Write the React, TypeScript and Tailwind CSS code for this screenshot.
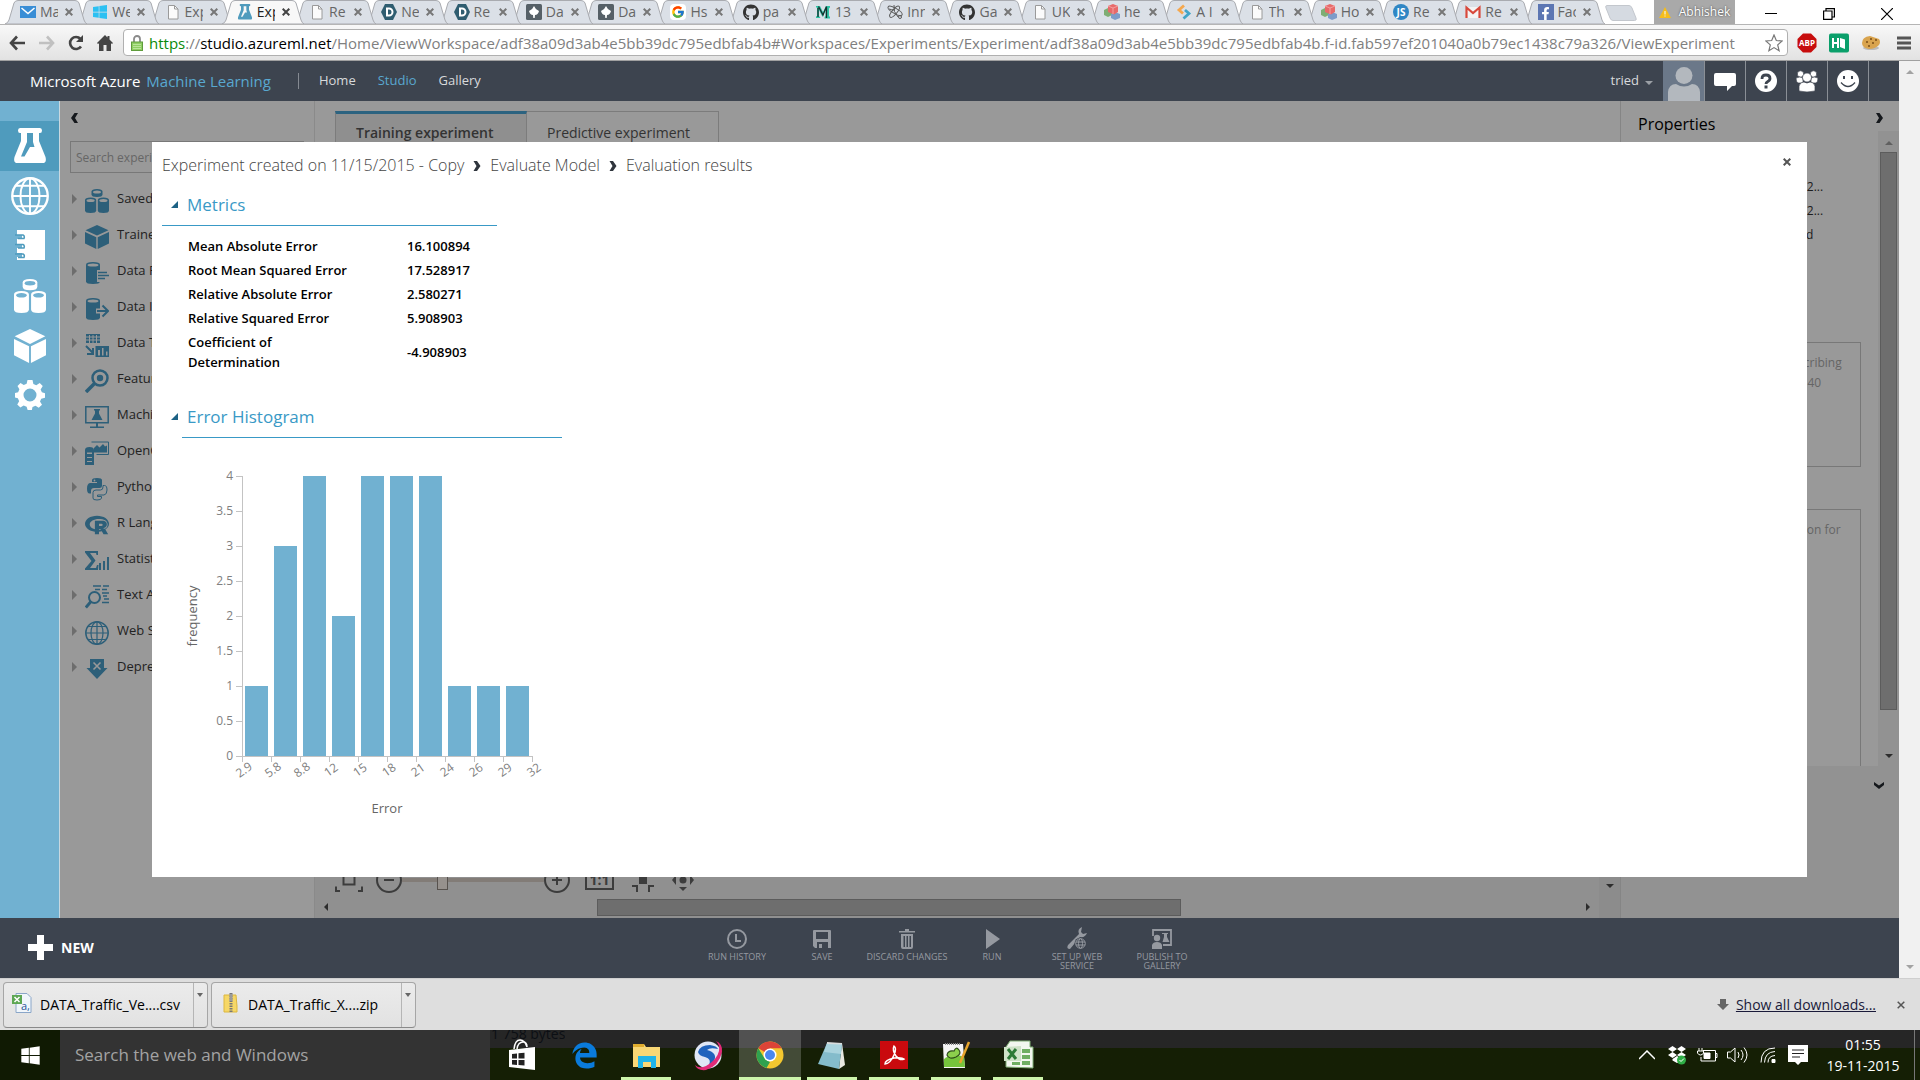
import { useState, type ReactNode } from 'react'
import { FaEdgeLegacy, FaFacebookF, FaGithub, FaRProject, FaWindows } from 'react-icons/fa'
import { FcGoogle } from 'react-icons/fc'

const SANS = "font-['Segoe_UI','Open_Sans','Noto_Sans',sans-serif]"

// ── Favicons ──────────────────────────────────────────────────────────────────

function PageIcon() {
  return (
    <svg viewBox="0 0 16 16" className="w-4 h-4" aria-hidden>
      <path d="M3.5 1.5h6l3.5 3.5v10h-9.500z" fill="#fbfbfb" stroke="#9a9a9a" />
      <path d="M9.500 1.500v3.500h3.500" fill="none" stroke="#9a9a9a" />
    </svg>
  )
}

function MailIcon() {
  return (
    <svg viewBox="0 0 16 16" className="w-4 h-4" aria-hidden>
      <path d="M0 2h16v12H0z" fill="#3a8ed6" />
      <path d="M1.500 4L8 9.500 14.500 4" fill="none" stroke="#fff" strokeWidth="1.500" />
    </svg>
  )
}

function FlaskIcon({ className = 'w-4 h-4' }: { className?: string }) {
  return (
    <svg viewBox="0 0 32 36" className={className} fill="currentColor" fillRule="evenodd" aria-hidden>
      <path d="M6 0h20q2 0 2 2.500T26 5h-1v8l6.500 16q1.500 6-3 6h-25q-4.500 0-3-6L7 13V5H6Q4 5 4 2.500T6 0zM13 5v9L7 28.500h3.500L16 19h4.500L19 14V5z" />
    </svg>
  )
}

function HexIcon() {
  return (
    <svg viewBox="0 0 16 16" className="w-4 h-4" aria-hidden>
      <path d="M4 0h8l4 8-4 8H4L0 8z" fill="#2f5d70" />
      <path d="M6 4.500h2a3.500 3.500 0 0 1 0 7H6z" fill="none" stroke="#fff" strokeWidth="2" />
    </svg>
  )
}

function LeafIcon() {
  return (
    <svg viewBox="0 0 16 16" className="w-4 h-4" aria-hidden>
      <rect width="16" height="16" rx="1.500" fill="#566067" />
      <path d="M8 2q1 3 5 5-1 4-4 4l-.3 3H7.300L7 11q-3 0-4-4 4-2 5-5z" fill="#fff" />
    </svg>
  )
}

function GoogleIcon() {
  return (
    <span className="flex w-4 h-4 items-center justify-center rounded-sm bg-white">
      <FcGoogle size={14} />
    </span>
  )
}

function MIcon() {
  return (
    <svg viewBox="0 0 16 16" className="w-4 h-4" aria-hidden>
      <path d="M1 2h4l3 6 3-6h4v1.500l-1 1V12l1 1v1.500H9.500V13l1-1V6L7.500 13 4 6v6l1.500 2H1V12.500l1-.5V4L1 3z" fill="#2fc3a5" />
      <path d="M3.500 2.500L8 11l3.500-8.500M11.500 3v11M3 4v9" fill="none" stroke="#16302d" strokeWidth="1.300" />
    </svg>
  )
}

function AtomIcon() {
  return (
    <svg viewBox="0 0 16 16" className="w-4 h-4" fill="none" stroke="#5b5b5b" aria-hidden>
      <ellipse cx="7.500" cy="7" rx="8" ry="2.600" transform="rotate(30 8 8)" />
      <ellipse cx="8" cy="7.500" rx="7" ry="2.400" transform="rotate(-50 8 8)" />
      <path d="M7 1q-1 7 4 12M2 5q3 1 5 1" />
      <circle cx="13" cy="13" r="1.500" />
    </svg>
  )
}

function CubesIcon() {
  return (
    <svg viewBox="0 0 16 16" className="w-4 h-4" aria-hidden>
      <path d="M0 6l4-2 4 2v5l-4 2-4-2z" fill="#7fae74" />
      <path d="M7 10l4-2 5 2v4l-5 2-4-2z" fill="#7d9cc9" />
      <path d="M4 2l5-2 5 2v6l-4 2.500L4 8z" fill="#e86a6a" />
      <path d="M4 2l5 2 5-2M9 4v6" fill="none" stroke="#f3a0a0" />
    </svg>
  )
}

function BracketsIcon() {
  return (
    <svg viewBox="0 0 16 16" className="w-4 h-4" fill="none" strokeWidth="2.800" aria-hidden>
      <path d="M8 1.500L3 6l4 3.500" stroke="#f5a84e" />
      <path d="M9 6l4 3.500-5.500 5" stroke="#42a5c8" />
    </svg>
  )
}

function JsIcon() {
  return (
    <svg viewBox="0 0 16 16" className="w-4 h-4" aria-hidden>
      <circle cx="8" cy="8" r="8" fill="#2f86c4" />
      <text x="8" y="12" textAnchor="middle" fontSize="10" fontWeight="700" fill="#fff">JS</text>
    </svg>
  )
}

function GmailIcon() {
  return (
    <svg viewBox="0 0 16 16" className="w-4 h-4" aria-hidden>
      <path d="M1 3h14v11H1z" fill="#f4f4f4" />
      <path d="M1.500 14V3.500L8 9l6.500-5.500V14" fill="none" stroke="#d8493c" strokeWidth="2.200" />
    </svg>
  )
}

function FacebookIcon() {
  return (
    <span className="flex w-4 h-4 items-end justify-center bg-[#5c76b3] text-white">
      <FaFacebookF size={13} />
    </span>
  )
}

const windowsIcon = <FaWindows size={16} className="text-[#2cc0f2]" />
const githubIcon = <FaGithub size={17} className="text-[#333]" />

const TABS: Array<{ label: string; icon: ReactNode; active?: boolean }> = [
  { label: 'Ma', icon: <MailIcon /> },
  { label: 'We', icon: windowsIcon },
  { label: 'Exp', icon: <PageIcon /> },
  { label: 'Exp', icon: <FlaskIcon className="w-4 h-4 text-[#4f9bbd]" />, active: true },
  { label: 'Re', icon: <PageIcon /> },
  { label: 'Ne', icon: <HexIcon /> },
  { label: 'Re', icon: <HexIcon /> },
  { label: 'Da', icon: <LeafIcon /> },
  { label: 'Da', icon: <LeafIcon /> },
  { label: 'Hs', icon: <GoogleIcon /> },
  { label: 'pa', icon: githubIcon },
  { label: '13', icon: <MIcon /> },
  { label: 'Inn', icon: <AtomIcon /> },
  { label: 'Ga', icon: githubIcon },
  { label: 'UK', icon: <PageIcon /> },
  { label: 'he', icon: <CubesIcon /> },
  { label: 'A I', icon: <BracketsIcon /> },
  { label: 'Th', icon: <PageIcon /> },
  { label: 'Ho', icon: <CubesIcon /> },
  { label: 'Re', icon: <JsIcon /> },
  { label: 'Re', icon: <GmailIcon /> },
  { label: 'Fac', icon: <FacebookIcon /> },
]

function Cross({ size = 8, width = 2 }: { size?: number; width?: number }) {
  return (
    <svg width={size} height={size} viewBox="0 0 8 8" stroke="currentColor" strokeWidth={width} aria-hidden>
      <path d="M.7.7l6.600 6.600M7.300.7L.7 7.300" />
    </svg>
  )
}

// ── Browser chrome ────────────────────────────────────────────────────────────

function TabStrip() {
  return (
    <div className="flex h-6 bg-white pl-[5px]">
      <div className="flex flex-1 min-w-0 isolate" role="tablist">
        {TABS.map((tab, i) => (
          <div
            key={i}
            role="tab"
            aria-selected={!!tab.active}
            className="relative flex flex-1 min-w-0 items-center pl-[15px]"
            style={{ zIndex: tab.active ? 50 : 30 - i }}
          >
            <svg viewBox="0 0 82 24" preserveAspectRatio="none" className="absolute left-0 top-0 -z-10 h-6 w-[82px]" aria-hidden>
              <path
                d="M0 24Q3 23 4 20L9 3Q10 .5 13 .5H70Q73 .5 74 3L79 20Q80 23 82 24Z"
                fill={tab.active ? '#f8f8f8' : '#dbe0e7'}
                stroke="#a9abb0"
              />
            </svg>
            <span className="flex w-4 shrink-0 justify-center">{tab.icon}</span>
            <span
              className={`ml-1 w-[18px] shrink-0 overflow-hidden whitespace-nowrap text-sm leading-5 ${
                tab.active ? 'text-[#222]' : 'text-[#666]'
              }`}
            >
              {tab.label}
            </span>
            <button type="button" aria-label="Close tab" className={`ml-[7px] shrink-0 ${tab.active ? 'text-[#444]' : 'text-[#777]'}`}>
              <Cross />
            </button>
          </div>
        ))}
      </div>
      <button type="button" aria-label="New tab" className="ml-[10px] mt-[5px] h-4 w-[32px]">
        <svg viewBox="0 0 32 16" className="h-4 w-8" aria-hidden>
          <path d="M2 .5h22q2 0 3 2.500l4 10q1 2.500-1.500 2.500H8q-2 0-3-2.500L1 3Q0 .5 2 .5z" fill="#d5dae1" stroke="#c3c7cd" />
        </svg>
      </button>
      <div className="ml-[17px] flex w-[81px] items-center justify-center gap-2 bg-[#a9a9a9] text-xs text-white">
        <svg viewBox="0 0 12 11" className="h-[11px] w-3" aria-hidden>
          <path d="M6 0l6 11H0z" fill="#f5bd1c" />
          <path d="M6 4v3.500M6 8.500v1" stroke="#fff" />
        </svg>
        <span className="[text-shadow:0_0_2px_#333]">Abhishek</span>
      </div>
      <div className="flex w-[185px] items-center text-black">
        <button type="button" aria-label="Minimize" className="ml-[30px] w-3">
          <svg viewBox="0 0 12 12" className="w-3 h-3 mt-1" stroke="currentColor" aria-hidden><path d="M0 5.500h12" /></svg>
        </button>
        <button type="button" aria-label="Restore" className="ml-[46px] w-3">
          <svg viewBox="0 0 12 12" className="w-3 h-3 mt-1" fill="none" stroke="currentColor" strokeWidth="1.200" aria-hidden>
            <path d="M.6 3h8.400v8.400H.6zM3 3V.6h8.400V9H9" />
          </svg>
        </button>
        <button type="button" aria-label="Close window" className="ml-[46px] w-3">
          <svg viewBox="0 0 12 12" className="w-3 h-3 mt-1" stroke="currentColor" strokeWidth="1.200" aria-hidden>
            <path d="M0 0l12 12M12 0L0 12" />
          </svg>
        </button>
      </div>
    </div>
  )
}

function AddressBar() {
  const [path, setPath] = useState(
    '/Home/ViewWorkspace/adf38a09d3ab4e5bb39dc795edbfab4b#Workspaces/Experiments/Experiment/adf38a09d3ab4e5bb39dc795edbfab4b.f-id.fab597ef201040a0b79ec1438c79a326/ViewExperiment',
  )
  return (
    <div className="flex h-[37px] items-center border-b border-t border-b-[#a0a0a0] border-t-[#b5b5b5] bg-linear-to-b from-[#f8f8f8] to-[#e2e2e2] pl-[9px] pr-[9px] text-[#4a4a4a]">
      <button type="button" aria-label="Back" className="w-4">
        <svg viewBox="0 0 16 16" className="w-4 h-4" fill="none" stroke="#444" strokeWidth="2.600" aria-hidden><path d="M8 1.500L2 8l6 6.500M2 8h14" /></svg>
      </button>
      <button type="button" aria-label="Forward" className="ml-[14px] w-4">
        <svg viewBox="0 0 16 16" className="w-4 h-4" fill="none" stroke="#c0c0c0" strokeWidth="2.600" aria-hidden><path d="M8 1.500L14 8l-6 6.500M14 8H0" /></svg>
      </button>
      <button type="button" aria-label="Reload" className="ml-[13px] w-4">
        <svg viewBox="0 0 16 16" className="w-4 h-4" fill="none" aria-hidden>
          <path d="M13 11.500A6 6 0 1 1 12.500 4" stroke="#444" strokeWidth="2.600" />
          <path d="M15 0v7H8z" fill="#444" />
        </svg>
      </button>
      <button type="button" aria-label="Home" className="ml-[13px] w-4">
        <svg viewBox="0 0 16 16" className="w-4 h-4" fill="#444" aria-hidden>
          <path d="M8 0l2.500 2.500V1h2v3.500L16 8l-1 1-1-.8V16H9.500v-6h-3v6H2V8.200L1 9 0 8z" />
        </svg>
      </button>
      <div className="ml-[10px] flex h-[27px] min-w-0 flex-1 items-center rounded-sm border border-[#b0b0b0] bg-white pl-[7px] pr-1 text-[15px] leading-6">
        <svg viewBox="0 0 12 16" className="h-4 w-3 shrink-0" aria-hidden>
          <path d="M3 8V4a3 3 0 0 1 6 0v4" fill="none" stroke="#8b8b8b" strokeWidth="1.800" />
          <rect x=".5" y="7" width="11" height="8.500" fill="#8fce63" stroke="#5f9c3c" />
          <path d="M2 9.500h8M2 11.500h8M2 13.500h8" stroke="#b9e59a" />
        </svg>
        <label htmlFor="address" className="ml-1.5 whitespace-nowrap text-[#808080]">
          <span className="text-[#0a8a0a]">https</span>://<span className="text-black">studio.azureml.net</span>
        </label>
        <input
          id="address"
          value={path}
          onChange={(e) => setPath(e.target.value)}
          className="min-w-0 flex-1 bg-transparent text-[#808080] outline-none"
        />
        <button type="button" aria-label="Bookmark this page">
          <svg viewBox="0 0 18 18" className="w-[18px] h-[18px]" fill="none" stroke="#777" strokeWidth="1.200" aria-hidden>
            <path d="M9 1l2.300 5.500 5.900.5-4.500 3.900 1.400 5.800L9 13.600l-5.100 3.100 1.400-5.800L.8 7l5.900-.5z" />
          </svg>
        </button>
      </div>
      <button type="button" aria-label="AdBlock Plus" className="ml-[9px] w-5">
        <svg viewBox="0 0 20 20" className="w-5 h-5" aria-hidden>
          <path d="M6 .5h8l5.500 5.500v8L14 19.500H6L.5 14V6z" fill="#c70d0d" />
          <text x="10" y="13" textAnchor="middle" fontSize="8" fontWeight="700" fill="#fff">ABP</text>
        </svg>
      </button>
      <button type="button" aria-label="Highlighter" className="ml-3 w-5">
        <svg viewBox="0 0 20 20" className="w-5 h-5" aria-hidden>
          <rect y=".5" width="20" height="19" rx="2" fill="#0a9f6a" />
          <path d="M4 5v10M4 10h5M9 5v10" stroke="#fff" strokeWidth="2" />
          <path d="M11 5l5 1.500V16l-5-2z" fill="#fff" />
        </svg>
      </button>
      <button type="button" aria-label="Cookies" className="ml-3 w-5">
        <svg viewBox="0 0 20 20" className="w-5 h-5" aria-hidden>
          <ellipse cx="10" cy="15" rx="8" ry="2" fill="#bbb" />
          <path d="M1 10q0-6 8-7l9 3q2 3 0 6-4 4-10 4-7-1-7-6z" fill="#d9a44e" />
          <path d="M5 9h2M9 6h2M11 10h2M7 13h2M14 7h2" stroke="#7b4d17" strokeWidth="1.500" />
        </svg>
      </button>
      <button type="button" aria-label="Menu" className="ml-4 w-[14px]">
        <svg viewBox="0 0 14 14" className="w-[14px] h-[14px]" stroke="#555" strokeWidth="3" aria-hidden>
          <path d="M0 2h14M0 7h14M0 12h14" />
        </svg>
      </button>
    </div>
  )
}

// ── Studio header ─────────────────────────────────────────────────────────────

const HEADER_ICONS: Array<{ name: string; icon: ReactNode }> = [
  {
    name: 'Feedback',
    icon: <path d="M2 3h18q2 0 2 2v9q0 2-2 2h-2l-5 5v-5H2q-2 0-2-2V5q0-2 2-2z" fill="#fff" />,
  },
  {
    name: 'Help',
    icon: (
      <>
        <circle cx="11" cy="11" r="11" fill="#fff" />
        <path d="M7 9q0-4 4-4t4 3.500q0 2-2.500 3.200-1.500.8-1.500 2.300" fill="none" stroke="#3d444f" strokeWidth="2.800" />
        <path d="M9.500 15.500h3v3h-3z" fill="#3d444f" />
      </>
    ),
  },
  {
    name: 'Community',
    icon: (
      <g fill="#fff" stroke="#3d444f" strokeWidth=".7">
        <circle cx="4.500" cy="4" r="3.200" />
        <circle cx="17.500" cy="4" r="3.200" />
        <path d="M0 8q4-2 7 0v5H2q-2-1-2-5zM22 8q-4-2-7 0v5h5q2-1 2-5z" />
        <circle cx="11" cy="7.500" r="4.500" />
        <path d="M3 21v-5q1-4 5-4 3 2 6 0 4 0 5 4v5q-8 2-16 0z" />
      </g>
    ),
  },
  {
    name: 'Smile',
    icon: (
      <>
        <circle cx="11" cy="11" r="11" fill="#fff" />
        <path d="M7 6v3M15 6v3" stroke="#3d444f" strokeWidth="2" />
        <path d="M4 12.500q7 8 14 0" fill="none" stroke="#3d444f" strokeWidth="1.300" />
      </>
    ),
  },
]

function StudioHeader() {
  return (
    <header className="flex h-10 items-stretch bg-[#3d444f] pl-[30px] text-[13px] text-[#d8dadc]">
      <div className="flex items-center gap-1.5 text-[15px]">
        <span className="text-white">Microsoft Azure</span>
        <span className="text-[#59a8d0]">Machine Learning</span>
      </div>
      <nav className="ml-[27px] flex items-center">
        <span className="mr-5 h-4 w-px bg-[#858a92]" />
        <a href="#home" className="mr-[22px]">Home</a>
        <a href="#studio" className="mr-[22px] text-[#59a8d0]">Studio</a>
        <a href="#gallery">Gallery</a>
      </nav>
      <button type="button" className="ml-auto mr-[10px] flex items-center gap-1.5">
        tried
        <svg viewBox="0 0 8 4" className="mt-1 h-1 w-2" fill="#9ba0a6" aria-hidden><path d="M0 0h8L4 4z" /></svg>
      </button>
      <button type="button" aria-label="Account" className="flex w-[41px] items-end justify-center bg-[#6b7889]">
        <svg viewBox="0 0 32 34" className="w-8 h-[34px]" fill="#b3b8be" aria-hidden>
          <circle cx="16" cy="8.500" r="8.500" />
          <path d="M0 34V25q1-8 8-8 8 5 16 0 7 0 8 8v9z" />
        </svg>
      </button>
      {HEADER_ICONS.map((h) => (
        <button key={h.name} type="button" aria-label={h.name} className="flex w-[41px] items-center justify-center border-l border-[#8a8f96]">
          <svg viewBox="0 0 22 22" className="w-[22px] h-[22px]" aria-hidden>{h.icon}</svg>
        </button>
      ))}
      <span className="w-[31px] border-l border-[#8a8f96]" />
    </header>
  )
}

// ── Module and rail icons, 24 × 24 ────────────────────────────────────────────

const cylinder = (x: number, y: number, w: number, h: number) => (
  <g>
    <path d={`M${x} ${y + 2.500}q0-2.500 ${w / 2}-2.500t${w / 2} 2.500v${h - 5}q0 2.500 -${w / 2} 2.500t-${w / 2}-2.500z`} />
    <ellipse cx={x + w / 2} cy={y + 3} rx={w / 2 - 1.500} ry="1.600" className="fill-(--hole)" />
  </g>
)

const cylinders = (
  <>
    {cylinder(6.500, 0, 11, 8)}
    {cylinder(0, 8.500, 11.200, 15.500)}
    {cylinder(12.800, 8.500, 11.200, 15.500)}
  </>
)

const cube = (
  <path d="M12 0l11.500 5.200L12 10.500.5 5.200zM0 7l11.300 5.200V24L0 18.500zM24 7l-11.300 5.200V24L24 18.500z" />
)

const globe = (
  <g fill="none" stroke="currentColor" strokeWidth="1.200">
    <circle cx="12" cy="12" r="11.200" strokeWidth="1.500" />
    <ellipse cx="12" cy="12" rx="6" ry="11.200" />
    <path d="M12 .8v22.400M.8 12h22.400M3 5.500h18M3 18.500h18" />
  </g>
)

const GEAR = (
  <path
    fillRule="evenodd"
    d="M10 0h4l.7 3.200 2.300 1L19.800 2.300l2.400 2.400-1.700 2.800 1 2.300L24 10.500v3.600l-3 .8-1 2.200 1.600 2.700-2.600 2.400-2.600-1.600-2.400 1L13.500 24h-3.400l-.8-2.600-2.400-1-2.600 1.600-2.500-2.500 1.500-2.600-1-2.300L0 14v-3.600l2.500-.7 1-2.300L2 4.800 4.400 2.300 7 3.900l2.300-1zM12 6.800a5.200 5.200 0 1 0 0 10.400 5.200 5.200 0 0 0 0-10.400z"
  />
)

const MODULES: Array<{ label: string; icon: ReactNode }> = [
  { label: 'Saved Datasets', icon: cylinders },
  { label: 'Trained Models', icon: cube },
  {
    label: 'Data Format Conversions',
    icon: (
      <>
        {cylinder(1, 1, 14, 22)}
        <path d="M12 9h12v12H12z" className="fill-(--hole)" />
        <path d="M13 11.500h9M13 14.500h11M13 17.500h7" stroke="currentColor" strokeWidth="1.600" />
      </>
    ),
  },
  {
    label: 'Data Input and Output',
    icon: (
      <>
        {cylinder(1, 1, 14, 22)}
        <path d="M11 14h12M17.500 8.500L23 14l-5.500 5.500" fill="none" className="stroke-(--hole)" strokeWidth="5" />
        <path d="M12 14h11M17.500 8.500L23 14l-5.500 5.500" fill="none" stroke="currentColor" strokeWidth="2" />
      </>
    ),
  },
  {
    label: 'Data Transformation',
    icon: (
      <>
        <path d="M1 1h14v9H1z" />
        <path d="M1 4h14M1 7h14M4.500 2v8M8 2v8M11.500 2v8" className="stroke-(--hole)" />
        <path d="M1 13l7 7M8 15v6H2" fill="none" stroke="currentColor" strokeWidth="2" />
        <path d="M10.500 24V13H24v11zM13 22.500h2V17h-2zm4 0h1.500V15H17zm4 0h1.500v-4H21z" fillRule="evenodd" />
      </>
    ),
  },
  {
    label: 'Feature Selection',
    icon: (
      <>
        <circle cx="15" cy="9" r="7.500" fill="none" stroke="currentColor" strokeWidth="2.500" />
        <circle cx="15" cy="9" r="3.200" />
        <path d="M9.500 14.500L1 23" stroke="currentColor" strokeWidth="3.500" />
      </>
    ),
  },
  {
    label: 'Machine Learning',
    icon: (
      <>
        <path d="M.8 1.800h22.400v16H.8z" fill="none" stroke="currentColor" strokeWidth="1.500" />
        <path d="M9 4h6v1.500h-1v3l3.500 6.500h-11L10 8.500v-3H9zM11 18h2v3.500h-2zM5 21.500h14V23H5z" />
      </>
    ),
  },
  {
    label: 'OpenCV Library Modules',
    icon: (
      <>
        <path d="M6.500 1h17v12.500h-12" fill="none" stroke="currentColor" />
        <path d="M9 11.500V7l3-3 2.500 2.500L18 3l2 2.500 2-1v7z" />
        <path d="M0 9q0-3 4.500-3T9 9v15H0zM2 13h5v-1.500H2zm0 4h5v-1H2zm0 4h5v-1H2z" fillRule="evenodd" />
      </>
    ),
  },
  {
    label: 'Python Language Modules',
    icon: (
      <>
        <path d="M7 5V3q0-2 5-2t5 2v6q0 2-2.500 2H9q-3 0-3 3v2.500H4.500Q2 16.500 2 11.500t3-5.500h7V5z" />
        <path d="M18 8.500h1.500q2.500 0 2.500 4.500t-3 5h-6.500v1.500h4V21q0 2-4.500 2T8 21v-5.500q0-2.500 3-2.500h4.500Q18 13 18 10z" fill="none" stroke="currentColor" />
        <circle cx="9.500" cy="3.500" r=".9" className="fill-(--hole)" />
      </>
    ),
  },
  { label: 'R Language Modules', icon: <FaRProject size={24} /> },
  {
    label: 'Statistical Functions',
    icon: <path d="M0 2h13v4h-1.500L11 4H5l5.500 7.500L5 19h6l1-3h1.500L13 21H0v-1.500L6.500 12 0 3.500zM14 14h2v7h-2zM18 12h2v9h-2zM22 8h2v13h-2z" />,
  },
  {
    label: 'Text Analytics',
    icon: (
      <>
        <path d="M8 1h8M18 1h6M10 4.500h5M17 4.500h5M17 8h7M18 11h4M19 14h5M17 17.500h7" stroke="currentColor" strokeWidth="1.600" />
        <circle cx="9.500" cy="12.500" r="5.500" fill="none" stroke="currentColor" strokeWidth="2" />
        <path d="M6 16.500L.8 22.500" stroke="currentColor" strokeWidth="3" />
      </>
    ),
  },
  { label: 'Web Service', icon: globe },
  {
    label: 'Deprecated',
    icon: (
      <>
        <path d="M5 2h14v9h3.500L12 22 1.500 11H5z" />
        <path d="M8.500 5.500l7 7M15.500 5.500l-7 7" className="stroke-(--hole)" strokeWidth="1.600" />
      </>
    ),
  },
]

function Rail() {
  const cell = 'flex w-full items-center justify-center text-white [--hole:#71b1d1]'
  return (
    <nav className="flex w-[60px] shrink-0 flex-col border-r border-[#c8d8e0] bg-[#71b1d1] pt-5">
      <a href="#experiments" aria-label="Experiments" className={`${cell} h-[50px] bg-[#4f9bbd]`}>
        <FlaskIcon className="h-9 w-8" />
      </a>
      <a href="#web-services" aria-label="Web services" className={`${cell} h-[50px]`}>
        <svg viewBox="0 0 24 24" className="w-[38px] h-[38px]" aria-hidden>{globe}</svg>
      </a>
      <a href="#notebooks" aria-label="Notebooks" className={`${cell} h-12`}>
        <svg viewBox="0 0 30 30" className="h-[30px] w-[30px]" fill="currentColor" aria-hidden>
          <path d="M2 0h28v30H2v-3h5V23H2v-5h5v-4H2V9h5V5H2z" />
          <path d="M0 5h8q2 1 1 3.500H3M0 14.500h8q2 1 1 3.500H3M0 24h8q2 1 1 3.500H3" fill="none" stroke="#4f9bbd" strokeWidth="1.500" />
        </svg>
      </a>
      <a href="#datasets" aria-label="Datasets" className={`${cell} h-[54px]`}>
        <svg viewBox="0 0 24 24" className="h-[34px] w-8" preserveAspectRatio="none" fill="currentColor" aria-hidden>{cylinders}</svg>
      </a>
      <a href="#models" aria-label="Trained models" className={`${cell} h-[46px]`}>
        <svg viewBox="0 0 24 24" className="h-[34px] w-8" preserveAspectRatio="none" fill="currentColor" aria-hidden>{cube}</svg>
      </a>
      <a href="#settings" aria-label="Settings" className={`${cell} h-[52px]`}>
        <svg viewBox="0 0 24 24" className="h-[30px] w-[30px]" fill="currentColor" aria-hidden>{GEAR}</svg>
      </a>
    </nav>
  )
}

function ModulePanel() {
  return (
    <aside className="w-[255px] shrink-0 border-r border-[#8a8a8a] pl-[10px]">
      <button type="button" aria-label="Collapse" className="mt-3 block">
        <svg viewBox="0 0 8 10" className="h-[10px] w-2" fill="#15181c" aria-hidden><path d="M4.500 0H8L5 5l3 5H4.500L1 5z" /></svg>
      </button>
      <input
        type="search"
        aria-label="Search experiment items"
        placeholder="Search experiment items"
        className="mt-[18px] block h-8 w-[234px] border border-[#787878] bg-transparent px-[5px] text-xs placeholder:text-[#666]"
      />
      <ul className="mt-2">
        {MODULES.map((m) => (
          <li key={m.label} className="flex h-9 w-[82px] items-center overflow-hidden whitespace-nowrap text-[#222] [--hole:#999]">
            <svg viewBox="0 0 5 10" className="ml-0.5 h-[10px] w-[5px] shrink-0" fill="#6d6d6d" aria-hidden><path d="M0 0l5 5-5 5z" /></svg>
            <svg viewBox="0 0 24 24" className="ml-2 mt-1 h-6 w-6 shrink-0 text-[#2d5f79]" fill="currentColor" aria-hidden>{m.icon}</svg>
            <span className="ml-2 text-[13px]">{m.label}</span>
          </li>
        ))}
      </ul>
    </aside>
  )
}

// ── Canvas ────────────────────────────────────────────────────────────────────

function Arrow({ dir, className = 'text-[#2d2d2d]' }: { dir: 'up' | 'down' | 'left' | 'right'; className?: string }) {
  const d = { up: 'M0 6l4-4 4 4z', down: 'M0 2h8L4 6z', left: 'M6 0v8L2 4z', right: 'M2 0l4 4-4 4z' }[dir]
  return <svg viewBox="0 0 8 8" className={`h-2 w-2 ${className}`} fill="currentColor" aria-hidden><path d={d} /></svg>
}

function Canvas() {
  const [zoom, setZoom] = useState(27)
  return (
    <section className="flex min-w-0 flex-1 flex-col">
      <div className="flex pl-5 pt-[10px] text-sm text-[#333]" role="tablist">
        <button type="button" role="tab" aria-selected className="h-10 w-48 border-x border-t-[3px] border-x-[#7c7c7c] border-t-[#2c6380] bg-[#8f8f8f] pl-1 text-left font-semibold">
          <span className="ml-4">Training experiment</span>
        </button>
        <button type="button" role="tab" aria-selected={false} className="h-10 w-48 border-r border-t border-[#7c7c7c] pl-1 pt-[2px] text-left">
          <span className="ml-4">Predictive experiment</span>
        </button>
      </div>
      <div className="mt-auto flex bg-[#909090]">
        <div className="min-w-0 flex-1">
          <div className="flex h-[35px] items-center pl-5 text-[#3c3c3c]">
            <button type="button" aria-label="Zoom to fit">
              <svg viewBox="0 0 28 24" className="h-6 w-7" fill="none" stroke="currentColor" strokeWidth="2" aria-hidden>
                <path d="M8.500 6.500h11v10h-11zM1 18.500V23h4M27 18.500V23h-4M1 5V1h4M27 5V1h-4" />
              </svg>
            </button>
            <button type="button" aria-label="Zoom out" className="ml-[13px]">
              <svg viewBox="0 0 26 26" className="h-[26px] w-[26px]" fill="none" stroke="currentColor" strokeWidth="2" aria-hidden>
                <circle cx="13" cy="13" r="12" /><path d="M8 13h10" />
              </svg>
            </button>
            <div className="flex w-[142px] items-center">
              <input
                type="range"
                aria-label="Zoom"
                value={zoom}
                onChange={(e) => setZoom(Number(e.target.value))}
                className="h-5 w-full appearance-none bg-transparent [&::-webkit-slider-runnable-track]:h-1 [&::-webkit-slider-runnable-track]:bg-[#827c77] [&::-webkit-slider-thumb]:-mt-2 [&::-webkit-slider-thumb]:h-5 [&::-webkit-slider-thumb]:w-[11px] [&::-webkit-slider-thumb]:appearance-none [&::-webkit-slider-thumb]:border [&::-webkit-slider-thumb]:border-[#57524e] [&::-webkit-slider-thumb]:bg-[#96918d]"
              />
            </div>
            <button type="button" aria-label="Zoom in">
              <svg viewBox="0 0 26 26" className="h-[26px] w-[26px]" fill="none" stroke="currentColor" strokeWidth="2" aria-hidden>
                <circle cx="13" cy="13" r="12" /><path d="M8 13h10M13 8v10" />
              </svg>
            </button>
            <button type="button" aria-label="Actual size" className="ml-[15px] flex h-5 w-[29px] items-center justify-center border-2 border-current text-sm font-bold leading-4">
              1:1
            </button>
            <button type="button" aria-label="Arrange" className="ml-[18px]">
              <svg viewBox="0 0 22 24" className="h-6 w-[22px]" aria-hidden>
                <path d="M7 7h8v9H7z" fill="currentColor" />
                <path d="M0 18h5v6M22 18h-5v6" fill="none" stroke="currentColor" strokeWidth="2" />
              </svg>
            </button>
            <button type="button" aria-label="Pan" className="ml-[18px]">
              <svg viewBox="0 0 22 24" className="h-6 w-[22px]" fill="currentColor" aria-hidden>
                <circle cx="11" cy="12" r="3.500" />
                <path d="M4 7v10l-4-5zM18 7v10l4-5zM7 19h8l-4 4zM7 4h8l-4-4z" />
              </svg>
            </button>
          </div>
          <div className="flex h-[21px] items-center px-[7px] pb-px">
            <Arrow dir="left" />
            <div className="ml-[21%] mr-auto h-[17px] w-[46%] border border-[#5c5c5c] bg-[#6e6e6e]" />
            <Arrow dir="right" />
          </div>
        </div>
        <div className="flex w-[21px] justify-center bg-[#8c8c8c] pt-5">
          <Arrow dir="down" />
        </div>
      </div>
    </section>
  )
}

// ── Properties ────────────────────────────────────────────────────────────────

function Properties() {
  return (
    <aside className="flex w-[279px] shrink-0 flex-col border-l border-[#858585]">
      <div className="flex h-[30px] justify-between pl-[17px] pr-[15px]">
        <h2 className="mt-[11px] text-base leading-6 text-black">Properties</h2>
        <button type="button" aria-label="Collapse properties">
          <svg viewBox="0 0 8 10" className="mt-1 h-[10px] w-2" fill="#15181c" aria-hidden><path d="M3.500 0H0l3 5-3 5h3.500L7 5z" /></svg>
        </button>
      </div>
      <div className="flex h-[635px] overflow-hidden">
        <div className="flex-1 pl-[17px] pr-[17px] pt-11">
          <dl className="grid grid-cols-[102px_1fr] text-xs leading-6 text-[#1c1c1c]">
            <dt>Start Time</dt>
            <dd>11/15/2015 2...</dd>
            <dt>End Time</dt>
            <dd>11/15/2015 2...</dd>
            <dt>Status Code</dt>
            <dd>Fully finished</dd>
          </dl>
          <label htmlFor="summary" className="mt-[70px] block h-[25px] text-sm">Summary</label>
          <textarea
            id="summary"
            placeholder={'Enter a short paragraph describing this new experiment (up to 140 characters)'}
            className="block h-[125px] w-full resize-none border border-[#787878] bg-transparent px-2 py-[10px] text-xs leading-5 placeholder:text-[#656565]"
          />
          <label htmlFor="description" className="mt-[17px] block h-[25px] text-sm">Description</label>
          <textarea
            id="description"
            placeholder="Enter a full detailed description for your experiment"
            className="block h-[260px] w-full resize-none border border-[#787878] bg-transparent px-2 py-[10px] text-xs leading-5 placeholder:text-[#656565]"
          />
        </div>
        <div className="flex w-[21px] flex-col items-center bg-[#929292] pt-2">
          <Arrow dir="up" className="text-[#606060]" />
          <div className="mt-[5px] h-[558px] w-[17px] border border-[#5c5c5c] bg-[#6e6e6e]" />
          <div className="mt-auto pb-[6px]"><Arrow dir="down" /></div>
        </div>
      </div>
      <div className="flex flex-1 justify-end bg-[#929292] pr-[15px] pt-4">
        <svg viewBox="0 0 10 8" className="h-2 w-[10px]" fill="#15181c" aria-hidden><path d="M0 0v3l5 4 5-4V0L5 3.500z" /></svg>
      </div>
    </aside>
  )
}

// ── Evaluation results ────────────────────────────────────────────────────────

const METRICS = [
  ['Mean Absolute Error', '16.100894'],
  ['Root Mean Squared Error', '17.528917'],
  ['Relative Absolute Error', '2.580271'],
  ['Relative Squared Error', '5.908903'],
  ['Coefficient of Determination', '-4.908903'],
]

const FREQUENCIES = [1, 3, 4, 2, 4, 4, 4, 1, 1, 1]
const EDGES = ['2.9', '5.8', '8.8', '12', '15', '18', '21', '24', '26', '29', '32']
const Y_TICKS = [0, 0.5, 1, 1.5, 2, 2.5, 3, 3.5, 4]

function Histogram() {
  const left = 80
  const bottom = 318
  const step = 29
  const unit = 70
  return (
    <svg width="400" height="400" viewBox="0 0 400 400" role="img" aria-label="Error histogram" className="block text-xs">
      {FREQUENCIES.map((f, i) => (
        <rect key={i} x={left + 3 + i * step} y={bottom - f * unit} width={23} height={f * unit} fill="#71b1d1" />
      ))}
      <g stroke="#c3c3c3" shapeRendering="crispEdges">
        <path d={`M${left + 0.5} ${bottom - 4 * unit}V${bottom + 0.5}H${left + 10 * step + 1}`} fill="none" />
        {Y_TICKS.map((t) => (
          <path key={t} d={`M${left - 6} ${bottom - t * unit + 0.5}h6`} />
        ))}
        {EDGES.map((e, i) => (
          <path key={e} d={`M${left + i * step + 0.5} ${bottom}v6`} />
        ))}
      </g>
      <g fill="#808080">
        {Y_TICKS.map((t) => (
          <text key={t} x={left - 9} y={bottom - t * unit + 4} textAnchor="end">{t}</text>
        ))}
        {EDGES.map((e, i) => {
          const x = left + i * step + 2
          return (
            <text key={e} x={x} y={bottom + 18} textAnchor="middle" transform={`rotate(-35 ${x} ${bottom + 14})`}>{e}</text>
          )
        })}
      </g>
      <g fill="#666" fontSize="13">
        <text x="225" y="375" textAnchor="middle">Error</text>
        <text x="35" y="178" textAnchor="middle" transform="rotate(-90 35 178)">frequency</text>
      </g>
    </svg>
  )
}

function Chevron() {
  return <svg viewBox="0 0 8 10" className="mx-[9px] mt-0.5 h-[10px] w-2" fill="#2f353d" aria-hidden><path d="M4 0H.5l3 5-3 5H4l3.500-5z" /></svg>
}

function Toggle() {
  return (
    <button type="button" aria-label="Toggle section" className="ml-[9px] w-[7px]">
      <svg viewBox="0 0 7 7" className="h-[7px] w-[7px]" fill="#1d6285" aria-hidden><path d="M7 0v7H0z" /></svg>
    </button>
  )
}

function ResultsDialog() {
  return (
    <div role="dialog" aria-label="Evaluation results" className="absolute bottom-[41px] left-[152px] right-[92px] top-[41px] bg-white pl-[10px]">
      <div className="flex h-[46px] items-center text-base font-light text-[#444]">
        <a href="#experiment">Experiment created on 11/15/2015 - Copy</a>
        <Chevron />
        <a href="#evaluate">Evaluate Model</a>
        <Chevron />
        <span>Evaluation results</span>
        <button type="button" aria-label="Close" className="mb-1.5 ml-auto mr-4 text-[#555]"><Cross width={2} /></button>
      </div>

      <div className="flex h-[38px] w-[335px] items-center border-b border-[#3999c6] pb-1">
        <Toggle />
        <h3 className="ml-[9px] text-[17px] text-[#3999c6]">Metrics</h3>
      </div>
      <table className="ml-[26px] mt-2 text-[13px] font-semibold text-black">
        <tbody>
          {METRICS.map(([name, value]) => (
            <tr key={name}>
              <th scope="row" className="w-[219px] py-0.5 pr-12 text-left font-semibold leading-5">{name}</th>
              <td className="py-0.5 leading-5">{value}</td>
            </tr>
          ))}
        </tbody>
      </table>

      <div className="mt-[26px] flex h-[38px] items-stretch">
        <div className="flex items-center pb-[5px]">
          <Toggle />
        </div>
        <h3 className="ml-1 flex w-[380px] items-center border-b border-[#3999c6] pb-1 pl-[5px] text-[17px] text-[#3999c6]">
          Error Histogram
        </h3>
      </div>
      <Histogram />
    </div>
  )
}

// ── Action bar ────────────────────────────────────────────────────────────────

const ACTIONS: Array<{ label: string; icon: ReactNode }> = [
  {
    label: 'RUN HISTORY',
    icon: <g fill="none" stroke="currentColor" strokeWidth="2"><circle cx="10" cy="10" r="9" /><path d="M9 5v7h5" /></g>,
  },
  {
    label: 'SAVE',
    icon: <path fillRule="evenodd" d="M1 2q0-1 1-1h16q1 0 1 1v17h-3v-6H5v6H3l-2-2zM4 3v7h12V3zM7 15h3v4H7z" />,
  },
  {
    label: 'DISCARD CHANGES',
    icon: <path fillRule="evenodd" d="M8 0h4v2h6v1.500H2V2h6zM4 5h12v13q0 2-2 2H6q-2 0-2-2zM6.500 7v11H8V7zm3 0v11h1.500V7zm3 0v11H14V7z" />,
  },
  { label: 'RUN', icon: <path d="M4 0l14 10L4 20z" /> },
  {
    label: 'SET UP WEB SERVICE',
    icon: (
      <>
        <path d="M15-2q-5 2-3 7L1 16q-2 4 2 4L13 8q5 1 7-4l-4 1-2-2z" />
        <circle cx="13.500" cy="14.500" r="6" fill="#3d444f" />
        <g fill="none" stroke="currentColor"><circle cx="13.500" cy="14.500" r="4.800" /><ellipse cx="13.500" cy="14.500" rx="2" ry="4.800" /><path d="M9 13h9M9 16h9" /></g>
      </>
    ),
  },
  {
    label: 'PUBLISH TO GALLERY',
    icon: (
      <>
        <path d="M1 7V1h18v15h-8" fill="none" stroke="currentColor" strokeWidth="1.800" />
        <path d="M10 4h6v1h-1v3l2.500 5h-7L12 8V5h-2z" />
        <circle cx="5" cy="9" r="3.200" />
        <path d="M0 20v-4q1-3 5-3t5 3v4z" />
      </>
    ),
  },
]

function ActionBar() {
  return (
    <footer className="relative flex h-[60px] justify-center bg-[#3d444f]">
      <button type="button" className="absolute left-[28px] top-[17px] flex items-center gap-2 text-sm font-bold text-white">
        <svg viewBox="0 0 25 25" className="h-[25px] w-[25px]" fill="currentColor" aria-hidden><path d="M9 0h7v9h9v7h-9v9H9v-9H0V9h9z" /></svg>
        NEW
      </button>
      {ACTIONS.map((a) => (
        <button key={a.label} type="button" className="flex w-[85px] flex-col items-center pt-[11px] text-[9px] leading-[9px] text-[#9599a0]">
          <svg viewBox="0 0 20 20" className="mb-[3px] h-5 w-5 shrink-0 overflow-visible" fill="currentColor" aria-hidden>{a.icon}</svg>
          <span className={a.label.length > 16 ? 'w-14' : 'whitespace-nowrap'}>{a.label}</span>
        </button>
      ))}
    </footer>
  )
}

// ── Downloads shelf ───────────────────────────────────────────────────────────

function Download({ name, icon }: { name: string; icon: ReactNode }) {
  return (
    <div className="flex h-[46px] w-[205px] rounded-sm border border-[#a6a6a6] border-b-[#8a8a8a] bg-linear-to-b from-[#ebebeb] to-[#e2e2e2]">
      <button type="button" className="flex flex-1 items-center pl-2 text-sm text-black">
        <span className="mb-1 w-5 shrink-0">{icon}</span>
        <span className="ml-2 whitespace-nowrap">{name}</span>
      </button>
      <button type="button" aria-label={`Options for ${name}`} className="w-[14px] border-l border-[#b5b5b5] pl-[3px] pb-5">
        <svg viewBox="0 0 6 4" className="h-1 w-1.5" fill="#666" aria-hidden><path d="M0 0h6L3 4z" /></svg>
      </button>
    </div>
  )
}

function Downloads() {
  return (
    <div className="flex h-[52px] items-center gap-[3px] border-t border-[#cfcfcf] bg-[#dedede] pl-[3px] pr-[15px]">
      <Download
        name="DATA_Traffic_Ve....csv"
        icon={
          <svg viewBox="0 0 20 20" className="h-5 w-5" aria-hidden>
            <path d="M4 .5h11l4 4V19.500H4z" fill="#f1f6fb" stroke="#8aa6c8" />
            <path d="M0 2h10v9H0z" fill="#5da754" />
            <path d="M2.500 4l5 5M7.500 4l-5 5" stroke="#fff" strokeWidth="1.500" />
            <text x="9" y="17" fontSize="11" fill="#2b5599">a,</text>
          </svg>
        }
      />
      <Download
        name="DATA_Traffic_X....zip"
        icon={
          <svg viewBox="0 0 20 20" className="h-5 w-5" aria-hidden>
            <path d="M4 2h12l1 11v6H4z" fill="#f6d766" stroke="#dcb73e" />
            <path d="M11 0v19" stroke="#777" strokeWidth="3" strokeDasharray="1.500 1" />
            <path d="M9.500 1h3v7h-3z" fill="#9a9a9a" />
          </svg>
        }
      />
      <svg viewBox="0 0 12 12" className="ml-auto h-3 w-3" fill="#666" aria-hidden><path d="M3 0h6v5h3l-6 6-6-6h3z" /></svg>
      <a href="#downloads" className="ml-1 text-sm text-[#1a1a3a] underline">Show all downloads...</a>
      <button type="button" aria-label="Close downloads" className="ml-[18px] text-[#555]"><Cross width={1.5} /></button>
    </div>
  )
}

// ── Taskbar ───────────────────────────────────────────────────────────────────

const APPS: Array<{ name: string; running?: boolean; active?: boolean; icon: ReactNode }> = [
  {
    name: 'Store',
    icon: (
      <>
        <path d="M1 9l26-3v23L1 26z" fill="#fff" />
        <path d="M6 8Q7-1 12-1t7 7M9 8Q10 1 15 1q4 0 4 5" fill="none" stroke="#fff" strokeWidth="1.500" />
        <path d="M4 13l5-.5v5H4zM10.500 12.300l6-.5v5.700h-6zM4 19h5v5l-5-.5zM10.500 19h6v5.500l-6-.5z" fill="#222" />
      </>
    ),
  },
  { name: 'Edge', icon: <FaEdgeLegacy size={27} x={1} y={1} color="#0a7bdc" /> },
  {
    name: 'File Explorer',
    running: true,
    icon: (
      <>
        <path d="M1 3h11l2 3h14v20H1z" fill="#f8d775" />
        <path d="M1 3h11v3H1z" fill="#e0ad2f" />
        <path d="M6 27V15h18v12h-5v-6h-8v6z" fill="#1fb4e8" />
      </>
    ),
  },
  {
    name: 'Sphere',
    icon: (
      <>
        <circle cx="14" cy="14" r="13.500" fill="#dfe6f5" />
        <path d="M4 11q2-7 12-7 7 1 8 4-8-2-11 1 11 3 7 11-1 3-5 4 3-6-4-8-6-1-7-5z" fill="#1f62bd" />
        <path d="M22 0q7 3 6 11-3 14-16 18-9 1-11-5 4 4 11 1 11-6 13-15 1-6-3-10z" fill="#e22a78" />
      </>
    ),
  },
  {
    name: 'Chrome',
    running: true,
    active: true,
    icon: (
      <>
        <circle cx="14" cy="14" r="13.500" fill="#f3c72f" />
        <path d="M14 14L2.300 7.300A13.500 13.500 0 0 1 25.700 7.300H14z" fill="#dc4437" />
        <path d="M2.300 7.300L9 18l5 3-3.500 6A13.500 13.500 0 0 1 2.300 7.300z" fill="#2fa14f" />
        <circle cx="14" cy="14" r="6.500" fill="#fff" />
        <circle cx="14" cy="14" r="5" fill="#4a87ee" />
      </>
    ),
  },
  {
    name: 'Notepad',
    running: true,
    icon: (
      <>
        <path d="M24 2l3 22-6 4z" fill="#e8e8e0" />
        <path d="M9 2l15 1-3 25L0 23z" fill="#84bccb" />
        <path d="M9 2l15 1-1 10-17-2z" fill="#a9d3dd" />
        <path d="M9 1l15 1v1.500L9 3z" fill="#d8dcdc" />
      </>
    ),
  },
  {
    name: 'Acrobat Reader',
    running: true,
    icon: (
      <>
        <path d="M0 0h28v28H0z" fill="#c90a0e" />
        <path d="M5 23q0-4 9-6 8-1 10 1-4 2-8-3-4-6-2-10 3 2 0 9-4 9-9 9z" fill="none" stroke="#fff" strokeWidth="1.500" />
      </>
    ),
  },
  {
    name: 'Notepad++',
    running: true,
    icon: (
      <>
        <path d="M1 3h20l2 24H2z" fill="#f5f5f5" />
        <path d="M2 18q9-7 20-2l1 10H2z" fill="#76c43c" />
        <path d="M5 14q1-5 7-4 2-5 5-1 3 4-3 7-7 3-9-2z" fill="#8ccf4c" stroke="#2d4d18" strokeWidth="1.200" />
        <path d="M27 1L18 22" stroke="#e7a52d" strokeWidth="2.500" />
        <path d="M3 3h16" stroke="#888" strokeWidth="2" strokeDasharray="1 1" />
      </>
    ),
  },
  {
    name: 'Excel',
    running: true,
    icon: (
      <>
        <path d="M6 0h20v6h3v21l-27-1V6z" fill="#f2f7ef" stroke="#7fae74" />
        <path d="M0 6l17-1v15L0 20z" fill="#cfe3c8" />
        <path d="M4 8l8 10M12 8L4 18" stroke="#2c7a35" strokeWidth="3" />
        <path d="M18 8h8v4h-8zM18 14h8v4h-8zM18 20h8v4h-8zM8 21h8v3H8z" fill="#6fae62" />
      </>
    ),
  },
]

function Taskbar() {
  return (
    <div className="relative flex h-[50px] items-stretch bg-linear-to-b from-[#262626] from-36% to-[#151f05] to-36% text-white">
      <button type="button" aria-label="Start" className="flex w-[60px] items-center justify-center bg-[#101a03]">
        <FaWindows size={21} />
      </button>
      <input
        type="text"
        aria-label="Search the web and Windows"
        placeholder="Search the web and Windows"
        className="w-[430px] bg-[#333] px-[15px] text-[17px] placeholder:text-[#a3a3a3]"
      />
      <span className="absolute left-[491px] top-0 h-[18px] overflow-hidden text-sm leading-[8px] text-[#0c0f14]">1 758 bytes</span>
      <div className="ml-px flex">
        {APPS.map((app) => (
          <button
            key={app.name}
            type="button"
            aria-label={app.name}
            className={`relative flex w-[62px] items-center justify-center ${app.active ? 'bg-white/20' : ''}`}
          >
            <svg viewBox="0 0 28 28" className="h-7 w-7 overflow-visible" aria-hidden>{app.icon}</svg>
            {app.running && (
              <span className={`absolute bottom-0 h-[3px] bg-[#cdf5ab] ${app.active ? 'inset-x-0' : 'inset-x-[6px]'}`} />
            )}
          </button>
        ))}
      </div>
      <div className="ml-auto flex items-center pr-[5px]">
        <svg viewBox="0 0 16 10" className="h-[10px] w-4" fill="none" stroke="#fff" strokeWidth="1.500" aria-hidden><path d="M0 9l8-8 8 8" /></svg>
        <svg viewBox="0 0 18 19" className="ml-[13px] h-[19px] w-[18px]" aria-hidden>
          <path d="M4.500 0L9 3 4.500 6 0 3zM13.500 0L18 3l-4.500 3L9 3zM4.500 6L9 9l-4.500 3L0 9zM13.500 6L18 9l-4.500 3L9 9zM4.500 13L9 10l4.500 3v1.500L9 17l-4.500-2.500z" fill="#fff" />
          <circle cx="13.500" cy="14" r="4.500" fill="#2fae46" />
          <path d="M11.500 14l1.500 1.500 3-3" fill="none" stroke="#fff" />
        </svg>
        <svg viewBox="0 0 21 14" className="ml-[11px] h-[14px] w-[21px]" fill="none" stroke="#fff" aria-hidden>
          <path d="M6 2.500h12.500V13H4V9M18.500 5.500H20v4h-1.500M2 0v3M5 0v3M.5 3h6v2q-1 2-3 2t-3-2z" />
          <path d="M7 5h6v5.500H7z" fill="#fff" />
        </svg>
        <svg viewBox="0 0 21 18" className="ml-[9px] h-[18px] w-[21px]" fill="none" stroke="#fff" aria-hidden>
          <path d="M.5 6h3L8 2v14l-4.500-4h-3zM11 6q2 3 0 6M14 4q4 5 0 10M17 1.500q6 7.500 0 15" />
        </svg>
        <svg viewBox="0 0 16 16" className="ml-3 h-4 w-4" fill="none" stroke="#fff" aria-hidden>
          <path d="M1 15.500Q1 1 15 1M4.500 15.500Q5 5 15 4.500M8 15.500Q8 9 15 8.500" />
          <path d="M12 12.500h3v3h-3z" fill="#fff" />
        </svg>
        <svg viewBox="0 0 20 20" className="ml-3 h-5 w-5" aria-hidden>
          <path d="M0 0h20v17h-7l-3 3-3-3H0z" fill="#fff" />
          <path d="M4 5h12M4 8.500h12M4 12h8" stroke="#222" />
        </svg>
        <div className="ml-[15px] w-20 whitespace-nowrap text-center text-sm leading-[21px]">
          <div>01:55</div>
          <div>19-11-2015</div>
        </div>
        <span className="ml-[11px] h-[50px] w-px bg-[#777]" />
      </div>
    </div>
  )
}

// ── Main ──────────────────────────────────────────────────────────────────────

export default function App() {
  return (
    <div className={`flex min-h-screen flex-col overflow-hidden ${SANS}`}>
      <TabStrip />
      <AddressBar />
      <div className="flex flex-1">
        <div className="flex min-w-0 flex-1 flex-col">
          <StudioHeader />
          <main className="relative flex flex-1 bg-[#999]">
            <Rail />
            <ModulePanel />
            <Canvas />
            <Properties />
            <ResultsDialog />
          </main>
          <ActionBar />
        </div>
        <div className="flex w-[21px] flex-col items-center justify-between bg-[#f1f1f1] py-[7px]">
          <Arrow dir="up" className="text-[#a3a3a3]" />
          <Arrow dir="down" className="text-[#a3a3a3]" />
        </div>
      </div>
      <Downloads />
      <Taskbar />
    </div>
  )
}
